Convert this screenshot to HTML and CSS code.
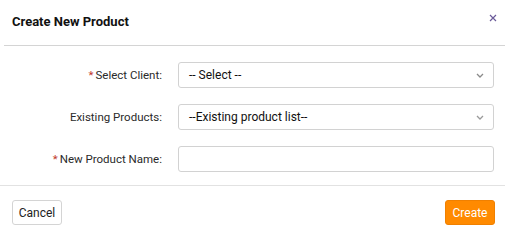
FILE: index.html
```html
<!DOCTYPE html>
<html lang="en">
<head>
<meta charset="utf-8">
<title>Create New Product</title>
<link rel="stylesheet" href="styles.css">
</head>
<body>
<div class="modal">
  <div class="modal-header">
    <h1 class="title">Create New Product</h1>
    <button class="close" aria-label="Close">
      <svg width="8" height="8" viewBox="0 0 8 8"><path d="M1 1L7 7M7 1L1 7" stroke="#6b5b9a" stroke-width="1.2" fill="none"/></svg>
    </button>
  </div>
  <div class="modal-body">
    <div class="row">
      <label class="label"><span class="req">*</span>Select Client:</label>
      <div class="field select"><span>-- Select --</span>
        <svg class="chev" width="8" height="5" viewBox="0 0 8 5"><path d="M1 1L4 4L7 1" stroke="#8a8a8a" stroke-width="1.3" fill="none"/></svg>
      </div>
    </div>
    <div class="row">
      <label class="label">Existing Products:</label>
      <div class="field select"><span>--Existing product list--</span>
        <svg class="chev" width="8" height="5" viewBox="0 0 8 5"><path d="M1 1L4 4L7 1" stroke="#9a9a9a" stroke-width="1.3" fill="none"/></svg>
      </div>
    </div>
    <div class="row">
      <label class="label"><span class="req">*</span>New Product Name:</label>
      <div class="field"></div>
    </div>
  </div>
  <div class="modal-footer">
    <button class="btn btn-cancel">Cancel</button>
    <button class="btn btn-create">Create</button>
  </div>
</div>
</body>
</html>
```

FILE: styles.css
```css
* { box-sizing: border-box; }
html, body { margin: 0; padding: 0; background: #fff; }
body {
  font-family: "Roboto", "Liberation Sans", sans-serif;
  color: #222;
}
.modal { width: 505px; }
.modal-header {
  display: flex;
  align-items: center;
  justify-content: space-between;
  height: 46px;
  margin-left: 4px;
  padding: 0 8px 2px 8px;
  border-bottom: 1px solid #d4d4d4;
}
.title {
  margin: 0;
  font-size: 13px;
  font-weight: 700;
  color: #111;
}
.close {
  border: 0;
  background: none;
  padding: 0;
  width: 8px;
  height: 8px;
  display: flex;
  margin-top: -8px;
  margin-right: 0;
}
.modal-body {
  display: flex;
  flex-direction: column;
  gap: 16px;
  padding: 16px 11px 13px 0;
  border-bottom: 1px solid #e2e2e2;
}
.row {
  display: flex;
  align-items: center;
  gap: 16px;
}
.label {
  width: 162px;
  text-align: right;
  font-size: 11.5px;
  color: #2a2a2a;
}
.req { color: #c0392b; margin-right: 2px; }
.field {
  flex: 1;
  height: 26px;
  border: 1px solid #d2d2d2;
  border-radius: 3px;
  display: flex;
  align-items: center;
  justify-content: space-between;
  padding: 0 9px 0 10px;
  font-size: 12px;
  color: #111;
}
.chev { margin-top: 1px; }
.modal-footer {
  display: flex;
  justify-content: space-between;
  padding: 14px 10px 0 12px;
}
.btn {
  height: 25px;
  border-radius: 3px;
  font-family: inherit;
  font-size: 12px;
  padding: 0;
}
.btn-cancel {
  width: 50px;
  background: #fff;
  border: 1px solid #d4d4d4;
  color: #222;
}
.btn-create {
  width: 50px;
  background: #ff8a00;
  border: 1px solid #f08000;
  color: #fff;
}
```
